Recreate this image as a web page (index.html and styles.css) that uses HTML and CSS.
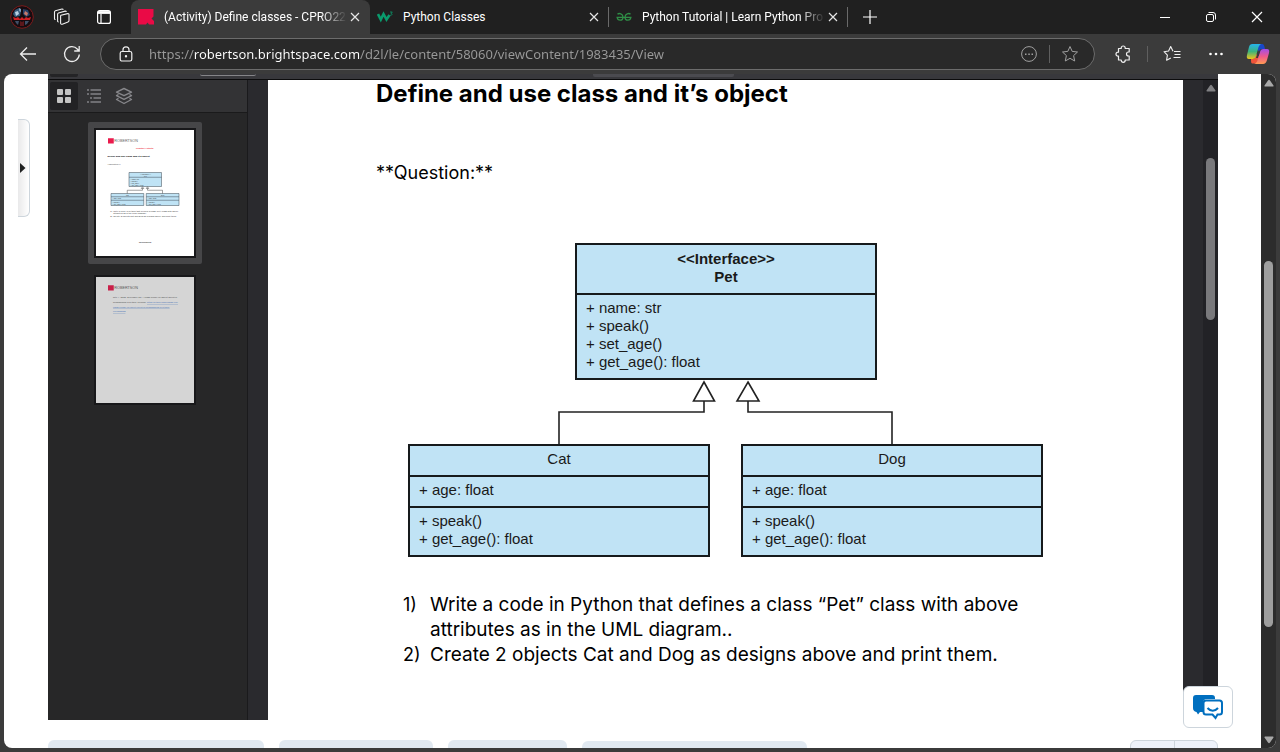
FILE: index.html
```html
<!DOCTYPE html>
<html lang="en">
<head>
<meta charset="utf-8">
<title>(Activity) Define classes - CPRO22</title>
<link rel="stylesheet" href="styles.css">
</head>
<body>
<header class="tabstrip">
  <button class="cell profile" aria-label="Profile">
    <svg width="24" height="24" viewBox="0 0 24 24"><circle cx="12" cy="12" r="11.3" fill="#160c10" stroke="#7d1c1c" stroke-width="1"/><path d="M5 5l4-2 2 3-1 5-5 1-2-3z" fill="#35597a"/><path d="M5 7l3-1 1 3-3 2z" fill="#b9d0e2"/><path d="M9 3l2 1v3l-2-1z" fill="#7f9fb8"/><path d="M13 4l5 1 2 5-4 2-3-3z" fill="#273f66"/><path d="M15 6l3 2-1 3-3-2z" fill="#c77a6b"/><path d="M3 12l3 1 2-1 2 2 2-2 2 2 2-2 2 1 3-1-1 3H4z" fill="#cf1f24"/><path d="M5 16h4l-1 4-2-2zM15 16h4l-2 3-2 1z" fill="#3f5068"/><path d="M10 16l2 1 2-1v5h-4z" fill="#5c171b"/></svg>
  </button>
  <button class="cell workspaces" aria-label="Workspaces">
    <svg width="18" height="18" viewBox="0 0 18 18" fill="none" stroke="#f0f0f0" stroke-width="1.1" stroke-linejoin="round"><path d="M8 7.3l6.6-1.7c.7-.1 1.4.3 1.4 1v6c0 .6-.4 1.100-1 1.300l-5.700 2.300C8.300 16.500 7.600 16 7.600 15.300V8c0-.3.100-.6.400-.7z"/><path d="M5.600 13.900c-.6.100-1-.3-1-.9V6.200c0-.6.300-1 .9-1.200l6.600-1.900c.7-.1 1.100.3 1.200.9"/><path d="M2.500 11.500c-.6.100-1-.3-1-.9V4c0-.6.300-1 .9-1.200L9 1c.7-.1 1.100.3 1.200.9"/></svg>
  </button>
  <button class="cell tabmenu" aria-label="Tab actions">
    <svg width="16" height="16" viewBox="0 0 16 16" fill="none" stroke="#fff" stroke-width="1.200"><rect x="1.600" y="1.600" width="12.800" height="12.800" rx="2"/><path d="M2 3.500h12" stroke-width="2.800"/><path d="M5 5v9"/></svg>
  </button>
  <nav class="tabs">
    <div class="tab active">
      <svg width="16" height="16" viewBox="0 0 16 16"><path d="M0 0h15.500v7.500l-2 2 2.500 2.500v3.500h-5l-1.500-2-1.500 2H0z" fill="#ea0a46"/></svg>
      <a class="tab-title fade" href="#">(Activity) Define classes - CPRO22</a>
      <button class="close" aria-label="Close tab"><svg width="10" height="10" viewBox="0 0 10 10"><path d="M1 1l8 8M9 1l-8 8" stroke="#e6e6e6" stroke-width="1.200"/></svg></button>
    </div>
    <div class="tab">
      <svg width="16" height="16" viewBox="0 0 16 16" fill="none" stroke="#0a9a6c"><path d="M1 5l2.800 5.500L6.500 5l3 5.500 3-4.500" stroke-width="2.600"/><path d="M13 3h2.300l-1.300 1.500c1.500 0 1.500 2-.9 1.800" stroke-width=".8"/></svg>
      <a class="tab-title" href="#">Python Classes</a>
      <button class="close" aria-label="Close tab"><svg width="10" height="10" viewBox="0 0 10 10"><path d="M1 1l8 8M9 1l-8 8" stroke="#e6e6e6" stroke-width="1.200"/></svg></button>
    </div>
    <div class="tab">
      <svg width="16" height="16" viewBox="0 0 16 16" fill="none" stroke="#2f8d46" stroke-width="1.300"><path d="M.5 8.300h15M1.500 5.200C3 3.800 7 4.500 7 8.200c0 4-5.500 4-5.800.1M14.500 5.200C13 3.800 9 4.500 9 8.200c0 4 5.500 4 5.800.1"/></svg>
      <a class="tab-title fade" href="#">Python Tutorial | Learn Python Pro</a>
      <button class="close" aria-label="Close tab"><svg width="10" height="10" viewBox="0 0 10 10"><path d="M1 1l8 8M9 1l-8 8" stroke="#e6e6e6" stroke-width="1.200"/></svg></button>
    </div>
  </nav>
  <button class="cell newtab" aria-label="New tab"><svg width="16" height="16" viewBox="0 0 16 16"><path d="M8 1v14M1 8h14" stroke="#fff" stroke-width="1.200"/></svg></button>
  <div class="spacer"></div>
  <button class="cell win" aria-label="Minimize"><svg width="12" height="12" viewBox="0 0 12 12"><path d="M1 6.500h10" stroke="#fff"/></svg></button>
  <button class="cell win" aria-label="Restore"><svg width="12" height="12" viewBox="0 0 12 12" fill="none" stroke="#fff"><rect x="1.500" y="3.500" width="7" height="7" rx="1.500"/><path d="M3.500 1.500H8a2.500 2.500 0 0 1 2.500 2.500v4.500"/></svg></button>
  <button class="cell win" aria-label="Close"><svg width="12" height="12" viewBox="0 0 12 12"><path d="M1 1l10 10M11 1L1 11" stroke="#fff" stroke-width="1.200"/></svg></button>
</header>

<div class="toolbar">
  <button class="cell tool" aria-label="Back"><svg width="18" height="16" viewBox="0 0 18 16" fill="none" stroke="#ededed" stroke-width="1.300"><path d="M17 8H1.500M8 1.500L1.500 8 8 14.500"/></svg></button>
  <button class="cell tool" aria-label="Refresh"><svg width="18" height="18" viewBox="0 0 18 18" fill="none" stroke="#ededed" stroke-width="1.300"><path d="M16.300 9.500A7.400 7.400 0 1 1 14.500 4.200L16 6M16.200 1v5h-5"/></svg></button>
  <div class="address">
    <svg width="14" height="16" viewBox="0 0 14 16" fill="none" stroke="#f0f0f0" stroke-width="1.200"><rect x="1.200" y="5.500" width="11.600" height="9.500" rx="1.800"/><path d="M4 5.500V3.800a3 3 0 0 1 6 0v1.700"/><circle cx="7" cy="10.300" r=".6" fill="#f0f0f0"/></svg>
    <input class="url" type="text" aria-label="Address" value="https://robertson.brightspace.com/d2l/le/content/58060/viewContent/1983435/View">
    <button class="bare" aria-label="Site options"><svg width="18" height="18" viewBox="0 0 18 18"><circle cx="9" cy="9" r="7.400" fill="none" stroke="#a0a0a0"/><path d="M5 8.500h1.500v1.500H5zM8.300 8.500h1.500v1.500H8.300zM11.500 8.500H13v1.500h-1.500z" fill="#a0a0a0"/></svg></button>
    <span class="rule"></span>
    <button class="bare" aria-label="Add favorite"><svg width="18" height="18" viewBox="0 0 18 18" fill="none" stroke="#a0a0a0" stroke-linejoin="round"><path d="M9 1.500l2.200 4.900 5.300.6-3.900 3.600 1.100 5.400L9 13.300 4.300 16l1.100-5.400L1.500 7l5.300-.6z"/></svg></button>
  </div>
  <button class="cell tool" aria-label="Extensions"><svg width="18" height="18" viewBox="0 0 18 18" fill="none" stroke="#f0f0f0" stroke-width="1.200" stroke-linejoin="round"><path d="M3.500 3.500h2.700V3a2 2 0 0 1 4 0v.5h4V7h-.7a2 2 0 0 0 0 4h.7v4h-4v.3a2 2 0 0 1-4 0V15H3.500v-3.800H3a2 2 0 0 1 0-4h.5z"/></svg></button>
  <span class="rule short"></span>
  <button class="cell tool" aria-label="Favorites"><svg width="18" height="18" viewBox="0 0 18 18" fill="none" stroke="#f0f0f0" stroke-width="1.100" stroke-linejoin="round"><path d="M11 6.500H17.500M11.500 9.500h6M10.500 12.500h7M10 6.200L7.700 1.500 5.600 6 1 6.700l3.400 3.400-.8 5.100 4.200-2.300"/></svg></button>
  <button class="cell tool" aria-label="Settings"><svg width="16" height="4" viewBox="0 0 16 4" fill="#fff"><circle cx="2.500" cy="2" r="1.300"/><circle cx="8" cy="2" r="1.300"/><circle cx="13.500" cy="2" r="1.300"/></svg></button>
  <button class="cell copilot" aria-label="Copilot">
    <svg width="24" height="22" viewBox="0 0 24 22">
      <defs>
        <linearGradient id="ca" x1="0" y1="0" x2="0" y2="1"><stop offset="0" stop-color="#25b4ee"/><stop offset=".5" stop-color="#3cb37c"/><stop offset="1" stop-color="#f0c41b"/></linearGradient>
        <linearGradient id="cb" x1="0" y1="0" x2="0" y2="1"><stop offset="0" stop-color="#a24de8"/><stop offset=".5" stop-color="#ef5a8c"/><stop offset="1" stop-color="#ff9a52"/></linearGradient>
      </defs>
      <path d="M9 1h7c2 0 2.500 2 3 5h-3c-2 0-2.500 1-3 3z" fill="#1947c9"/>
      <path d="M6 20.500h5l2-7-3-2.500-2 5H5c0 2 0 4.500 1 4.500z" fill="#f0543a"/>
      <path d="M6.500 1H15c-2 1-2.500 3-3 5l-2 7c-.6 2-1.500 3-3.500 3H3c-2 0-2.600-1.500-2-4L3 4c.5-2 1.500-3 3.500-3z" fill="url(#ca)"/>
      <path d="M17.500 6H21c2 0 2.600 1.500 2 4l-2 7c-.7 2.500-2 4-4 4H8c2-.500 3-2 3.500-4l2.500-8c.6-2 1.500-3 3.500-3z" fill="url(#cb)"/>
      <path d="M12 8.500h1.800l-2 6.500h-1.800z" fill="#3b3b3b"/>
    </svg>
  </button>
</div>

<main class="window">
  <div class="content">
    <div class="course">
      <div class="gutter"><button class="drawer" aria-label="Open panel"><svg width="6" height="10" viewBox="0 0 6 10"><path d="M0 0l5.500 5L0 10z" fill="#202122"/></svg></button></div>
      <section class="viewer">
        <div class="viewer-bar"><span class="stub first"></span><span class="stub second"></span><span class="stub third"></span></div>
        <div class="viewer-body">
          <aside class="sidebar">
            <div class="side-tools">
              <button class="side-tool on" aria-label="Thumbnails"><svg width="16" height="16" viewBox="0 0 16 16" fill="#c4c4c4"><rect x="1" y="1" width="6" height="6" rx="1"/><rect x="9" y="1" width="6" height="6" rx="1"/><rect x="1" y="9" width="6" height="6" rx="1"/><rect x="9" y="9" width="6" height="6" rx="1"/></svg></button>
              <button class="side-tool" aria-label="Outline"><svg width="16" height="16" viewBox="0 0 16 16" stroke="#838386" stroke-width="1.600"><path d="M1 2h2M4.500 2h10.500M1 6h2M4.500 6h10.500M4 10h2M7.500 10h7.500M1 14h2M4.500 14h10.500"/></svg></button>
              <button class="side-tool" aria-label="Layers"><svg width="18" height="18" viewBox="0 0 18 18" fill="none" stroke="#86868a" stroke-width="1.400" stroke-linejoin="round"><path d="M9 1.500l7.500 3.600L9 8.700 1.500 5.100zM3.500 7.500l-2 1.200L9 12.300l7.500-3.600-2-1.200M3.500 11.300l-2 1.200L9 16.500l7.500-4-2-1.200"/></svg></button>
            </div>
            <div class="thumbs">
              <a class="thumb selected" href="#" aria-label="Page 1">
                <svg width="98" height="126" viewBox="4 4 392 504" font-family="Liberation Sans, sans-serif" fill="#333">
                  <rect width="400" height="512" fill="#fff"/>
                  <rect x="52" y="37" width="23" height="21" fill="#ea1a4c"/>
                  <text x="77" y="53" font-size="15" fill="#666">ROBERTSON</text>
                  <text x="164" y="79" font-size="9" fill="#ee2233" font-weight="bold">Practice Activity</text>
                  <text x="50" y="112" font-size="10" font-weight="bold" fill="#000">Define and use class and it’s object</text>
                  <text x="50" y="144" font-size="9">**Question:**</text>
                  <g fill="#bfe3f5" stroke="#3a4650" stroke-width="2"><path d="M136 174h130v56H136zM136 193h130M64 258h131v48H64zM64 271h131M64 285h131M205 258h131v48H205zM205 271h131M205 285h131"/></g>
                  <path d="M129 258v-13h61v-7m-5 0l5-7 5 7zM270 258v-13h-60v-7m-5 0l5-7 5 7z" fill="none" stroke="#444" stroke-width="2"/>
                  <g font-size="7"><text x="180" y="183">&lt;&lt;Interface&gt;&gt;</text><text x="196" y="190">Pet</text><text x="141" y="202">+ name: str</text><text x="141" y="210">+ speak()</text><text x="141" y="218">+ set_age()</text><text x="141" y="226">+ get_age(): float</text><text x="124" y="268">Cat</text><text x="264" y="268">Dog</text><text x="69" y="281">+ age: float</text><text x="210" y="281">+ age: float</text><text x="69" y="295">+ speak()</text><text x="210" y="295">+ speak()</text><text x="69" y="303">+ get_age(): float</text><text x="210" y="303">+ get_age(): float</text></g>
                  <g font-size="9"><text x="61" y="330">1)</text><text x="73" y="330">Write a code in Python that defines a class “Pet” class with above</text><text x="73" y="340">attributes as in the UML diagram..</text><text x="61" y="351">2)</text><text x="73" y="351">Create 2 objects Cat and Dog as designs above and print them.</text><text x="176" y="456" font-weight="bold">References</text></g>
                </svg>
              </a>
              <a class="thumb" href="#" aria-label="Page 2">
                <svg width="98" height="126" viewBox="4 4 392 504" font-family="Liberation Sans, sans-serif" fill="#444">
                  <rect width="400" height="512" fill="#d5d5d5"/>
                  <rect x="52" y="37" width="23" height="21" fill="#c91f49"/>
                  <text x="77" y="53" font-size="15" fill="#555">ROBERTSON</text>
                  <g font-size="9"><text x="72" y="89">Ritu, I. (2021, December 05). A crash course on Object Oriented</text><text x="72" y="108">programming in Python. Medium.</text>
                  <g fill="#3f6fb5" text-decoration="underline"><text x="208" y="108">https://python.plainenglish.io/a-</text><text x="72" y="127">crash-course-on-object-oriented-programming-in-python-</text><text x="72" y="145">ca40588932</text></g></g>
                </svg>
              </a>
            </div>
          </aside>
          <div class="canvas">
            <article class="page">
              <h1 class="title">Define and use class and it’s object</h1>
              <p class="question">**Question:**</p>
              <div class="diagram">
                <svg class="links" width="635" height="315" viewBox="0 0 635 315" fill="none" stroke="#222" stroke-width="1.600"><path d="M151 202v-33h145v-12M484 202v-33H340v-12"/><path d="M296 139l10.500 19h-21zM340 139l11 19h-22z" fill="#fff"/></svg>
                <div class="uml pet">
                  <div class="part head"><strong>&lt;&lt;Interface&gt;&gt;<br>Pet</strong></div>
                  <div class="part">+ name: str<br>+ speak()<br>+ set_age()<br>+ get_age(): float</div>
                </div>
                <div class="uml cat">
                  <div class="part name">Cat</div><div class="part">+ age: float</div><div class="part">+ speak()<br>+ get_age(): float</div>
                </div>
                <div class="uml dog">
                  <div class="part name">Dog</div><div class="part">+ age: float</div><div class="part">+ speak()<br>+ get_age(): float</div>
                </div>
              </div>
              <ol class="tasks">
                <li><span class="num">1)</span><span>Write a code in Python that defines a class “Pet” class with above<br>attributes as in the UML diagram..</span></li>
                <li><span class="num">2)</span><span>Create 2 objects Cat and Dog as designs above and print them.</span></li>
              </ol>
            </article>
            <div class="track inner"><svg width="10" height="8" viewBox="0 0 10 8"><path d="M4 1.500q1-1.500 2 0l3.500 5q.3 1-.7 1H1.200q-1 0-.7-1z" fill="#808083"/></svg><span class="handle"></span></div>
          </div>
        </div>
      </section>
      <button class="chat" aria-label="Chat"><svg width="32" height="26" viewBox="0 0 32 26"><path d="M4 1h16c2 0 3 1 3 3v1h-8c-3 0-4 2-4 4v9l-3 0-2 2.500-1.500-2.500C2 17.500 1 16 1 14V4c0-2 1-3 3-3z" fill="#006fbf"/><path d="M14 6.500h13.500c1.500 0 2.500 1 2.500 2.500v9c0 1.500-1 2.500-2.500 2.500h-2l-2 3.500-3-3.500H14c-1.500 0-2.500-1-2.500-2.500V9c0-1.500 1-2.500 2.500-2.500z" fill="#fff" stroke="#006fbf" stroke-width="2"/><path d="M15.500 14c3 3.500 7.500 3.500 10.500 0" fill="none" stroke="#006fbf" stroke-width="2"/></svg></button>
    </div>
    <div class="actions">
      <button class="act a1" aria-label="Action 1"></button><button class="act a2" aria-label="Action 2"></button><button class="act a3" aria-label="Action 3"></button><button class="act a4" aria-label="Action 4"></button>
      <div class="pager"><button aria-label="Previous"></button><button aria-label="Next"></button></div>
    </div>
  </div>
  <div class="track outer"><svg width="10" height="8" viewBox="0 0 10 8"><path d="M4 1.500q1-1.500 2 0l3.500 5q.3 1-.7 1H1.200q-1 0-.7-1z" fill="#a8a8a8"/></svg><span class="handle"></span><svg class="down" width="10" height="8" viewBox="0 0 10 8"><path d="M4 6.500q1 1.500 2 0l3.500-5q.3-1-.7-1H1.200q-1 0-.7 1z" fill="#a8a8a8"/></svg></div>
</main>
</body>
</html>
```

FILE: styles.css
```css
* { box-sizing: border-box; }
html, body { height: 100%; }
body {
  margin: 0;
  display: flex;
  flex-direction: column;
  overflow: hidden;
  background: #3b3b3b;
  font-family: Roboto, "Open Sans", sans-serif;
  font-size: 12px;
}
button { border: 0; padding: 0; background: none; }
svg { display: block; flex: none; }

/* Browser chrome */
.tabstrip { display: flex; height: 34px; flex: none; background: #202020; }
.cell { display: flex; align-items: center; justify-content: center; flex: none; }
.profile { width: 44px; }
.workspaces { width: 36px; }
.tabmenu { width: 48px; margin-right: 3px; }
.tabs { display: flex; }
.tab {
  display: flex;
  align-items: center;
  width: 239px;
  padding: 0 10px 0 7px;
  color: #fff;
  position: relative;
}
.tab:not(.active)::after { content: ""; position: absolute; right: 0; top: 7px; width: 1px; height: 20px; background: #6a6a6a; }
.tab.active { background: #3b3b3b; border-radius: 8px 8px 0 0; }
.tab-title {
  flex: 1;
  margin-left: 10px;
  white-space: nowrap;
  color: inherit;
  text-decoration: none;
}
.fade {
  -webkit-mask-image: linear-gradient(to right, #000 calc(100% - 26px), transparent);
  mask-image: linear-gradient(to right, #000 calc(100% - 26px), transparent);
}
.close { width: 16px; height: 20px; margin-right: -3px; display: flex; align-items: center; justify-content: center; }
.newtab { width: 44px; }
.spacer { flex: 1; }
.win { width: 46px; }

.toolbar { display: flex; align-items: center; height: 40px; flex: none; padding: 0 2px 0 6px; }
.tool { width: 44px; height: 32px; }
.copilot { width: 40px; height: 32px; }
.address {
  flex: 1;
  display: flex;
  align-items: center;
  height: 32px;
  margin: 0 7px 0 6px;
  padding: 0 15px 0 18px;
  border: 1px solid #6c6c6c;
  border-radius: 16px;
  background: #292929;
}
.url {
  flex: 1;
  min-width: 0;
  height: 28px;
  margin: 0 10px 0 16px;
  padding: 0;
  border: 0;
  outline: 0;
  font-family: "Noto Sans", sans-serif;
  font-size: 13px;
  color: transparent;
  background: linear-gradient(to right, #9a9a9a 45px, #fff 45px, #fff 210px, #9a9a9a 210px);
  -webkit-background-clip: text;
  background-clip: text;
}
.bare { display: flex; }
.rule { width: 1px; height: 18px; margin: 0 11px; background: #5f5f5f; }
.rule.short { height: 16px; margin: 0 2px 0 1px; }

/* Web content */
.window {
  flex: 1;
  min-height: 0;
  display: flex;
  margin: 0 4px 4px;
  border-radius: 8px;
  overflow: hidden;
  background: #fff;
}
.content { flex: 1; min-width: 0; display: flex; flex-direction: column; }
.course { flex: 1; min-height: 0; display: flex; padding-right: 43px; position: relative; }
.gutter { width: 44px; padding: 45px 0 0 14px; }
.drawer {
  display: flex;
  align-items: center;
  width: 12px;
  height: 98px;
  padding-left: 2px;
  border: 1px solid #cdd5dc;
  border-left: 0;
  border-radius: 0 6px 6px 0;
  background: linear-gradient(to right, #e9e9ea, #fff);
}
.viewer { flex: 1; min-width: 0; display: flex; flex-direction: column; }
.viewer-bar { display: flex; height: 6px; flex: none; background: #38383c; border-bottom: 1px solid #0c0c0d; }
.stub { height: 2px; }
.stub.first { width: 28px; margin-left: 2px; height: 3px; background: #242426; border-radius: 0 0 2px 2px; }
.stub.second { width: 56px; margin-left: 122px; border-bottom: 1px solid #858588; border-radius: 0 0 2px 2px; }
.stub.third { width: 141px; height: 3px; margin-left: 337px; background: #4b4b50; border-radius: 0 0 2px 2px; }
.viewer-body { flex: 1; min-height: 0; display: flex; background: #2a2a2e; }
.sidebar { width: 200px; background: #272728; border-right: 1px solid #1a1a1c; }
.side-tools { display: flex; gap: 2px; height: 33px; padding: 2px; background: #333335; border-bottom: 1px solid #1a1a1b; }
.side-tool { width: 28px; height: 28px; border-radius: 2px; display: flex; align-items: center; justify-content: center; }
.side-tool.on { background: #222224; }
.thumbs { display: flex; flex-direction: column; align-items: center; gap: 5px; padding-top: 9px; padding-right: 5px; }
.thumb { padding: 6px; border-radius: 2px; }
.thumb svg { border: 2px solid #18181a; box-sizing: content-box; }
.thumb.selected { background: #464648; }
.canvas { flex: 1; min-width: 0; display: flex; padding-left: 20px; }
.page {
  flex: 1;
  min-width: 0;
  margin-right: 20px;
  padding: 0 108px;
  background: #fff;
  color: #000;
  font-family: Inter, "Open Sans", sans-serif;
  font-size: 18px;
  line-height: 25px;
}
.title { margin: 0; font-size: 24px; line-height: 28px; font-weight: 700; white-space: nowrap; }
.question { margin: 52px 0 58px; }
.diagram { position: relative; width: 635px; height: 315px; margin-left: 32px; font-family: "Liberation Sans", sans-serif; font-size: 15px; line-height: 18px; color: #1a1a1a; }
.links { position: absolute; left: 0; top: 0; }
.uml { position: absolute; width: 302px; border: 2px solid #161a1c; background: #c0e3f5; }
.pet { left: 167px; top: 0; }
.cat { left: 0; top: 201px; }
.dog { left: 333px; top: 201px; }
.part { padding: 4px 9px 7px; }
.part + .part { border-top: 2px solid #161a1c; }
.head { padding: 5px 9px 7px; text-align: center; }
.name { text-align: center; }
.tasks { list-style: none; margin: 34px 0 0; padding: 0 0 0 27px; font-size: 19px; white-space: nowrap; }
.tasks li { display: flex; }
.num { width: 27px; font-size: 18px; }

.track { display: flex; flex-direction: column; align-items: center; width: 15px; flex: none; }
.inner { background: #222226; padding-top: 4px; }
.outer { background: #2c2c2c; padding: 5px 0 4px; }
.handle { width: 9px; border-radius: 5px; }
.inner .handle { height: 162px; margin-top: 66px; background: #79797c; }
.outer .handle { height: 55%; margin-top: 174px; background: #9e9e9e; }
.down { margin-top: auto; }

.chat {
  position: absolute;
  right: 28px;
  bottom: -8px;
  width: 50px;
  height: 42px;
  display: flex;
  align-items: center;
  justify-content: center;
  border: 1px solid #cdd5dc;
  border-radius: 6px;
  background: #fff;
}
.actions { display: flex; gap: 15px; height: 28px; flex: none; padding: 20px 43px 0 44px; overflow: hidden; }
.act { height: 36px; border-radius: 6px; background: #e1e9f1; }
.a1 { width: 216px; }
.a2 { width: 154px; }
.a3 { width: 119px; }
.a4 { width: 225px; margin-top: 1px; }
.pager { display: flex; width: 88px; height: 36px; margin-left: auto; border: 1px solid #cdd5dc; border-radius: 6px; background: #eef2fa; }
.pager button { flex: 1; }
.pager button + button { border-left: 1px solid #cdd5dc; }
```
